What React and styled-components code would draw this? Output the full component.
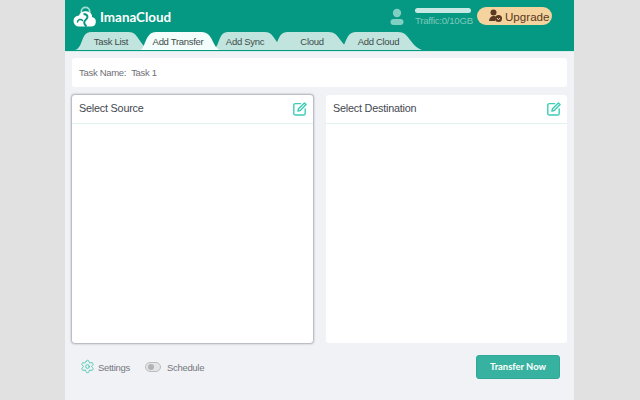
import React from "react";
import styled, { createGlobalStyle } from "styled-components";
import { Settings } from "lucide-react";

const Global = createGlobalStyle`
  html, body { margin: 0; padding: 0; background: #e1e1e1; }
  body { font-family: "Liberation Sans", Arial, sans-serif; }
  #root { width: 640px; height: 400px; overflow: hidden; }
`;
const Page = styled.div`
  width: 509px; height: 400px; margin-left: 65px; background: #f0f2f6;
  display: flex; flex-direction: column;
`;
const Header = styled.header`
  height: 52px; box-sizing: border-box; background: #059882; flex: none; padding: 0 0 0 8px;
  display: flex; flex-direction: column; border-bottom: 1px solid #d4efea;
`;
const TopBar = styled.div`
  height: 32px; display: flex; align-items: center; flex: none;
`;
const Logo = styled.div`
  display: flex; align-items: center; gap: 3px; margin-top: 1px;
  color: #fff; font-family: "Lato", sans-serif; font-size: 13.4px; font-weight: 700;
  svg { display: block; }
`;
const Account = styled.div`
  margin-left: auto; margin-right: 22px; display: flex; align-items: center;
`;
const UserIcon = styled.svg`
  width: 14px; height: 18px; margin-right: 11px; margin-top: 1px;
`;
const Usage = styled.div`
  width: 56px; margin-right: 6px; display: flex; flex-direction: column; gap: 2px; margin-top: 3px;
`;
const UsageBar = styled.div`
  height: 5px; border-radius: 3px; background: #c7e8e3;
`;
const UsageText = styled.div`
  font-size: 9.6px; letter-spacing: -.25px; line-height: 12px; color: #7fcabd; white-space: nowrap;
`;
const Upgrade = styled.div`
  width: 75px; height: 18px; border-radius: 9px; background: #f5d39e;
  display: flex; align-items: center; color: #5a3a22; font-size: 11.6px; padding-left: 11px;
  box-sizing: border-box; gap: 2px;
`;
const Tabs = styled.nav`
  display: flex; height: 18px; margin-left: 2px;
`;
const TabItem = styled.div`
  position: relative; height: 18px; width: ${p => p.$w}px; margin-right: ${p => p.$mr || 0}px;
  z-index: ${p => (p.$active ? 2 : 1)};
  display: flex; align-items: center; justify-content: center;
  font-size: 9.5px; letter-spacing: -.3px; color: #404b49; padding-top: 1px; box-sizing: border-box;
  padding-right: ${p => p.$pr || 0}px;
  padding-left: ${p => p.$pl || 0}px;
  svg { position: absolute; inset: 0; width: 100%; height: 100%; }
  span { position: relative; }
`;
const Tab = ({ w, mr, pr, pl, active, children }) => (
  <TabItem $w={w} $mr={mr} $pr={pr} $pl={pl} $active={active}>
    <svg viewBox="0 0 70 18" preserveAspectRatio="none">
      <path
        d={active
          ? "M0 18C5 17 4 0 14 0L54 0C64 0 63 15 70 18Z"
          : "M0 18C8 16 5 0 15 0L50 0C60 0 59 13 70 18Z"}
        fill={active ? "#f3fdfb" : "#c2e4de"}
      />
    </svg>
    <span>{children}</span>
  </TabItem>
);
const Main = styled.main`
  flex: 1; padding: 6px 7px 0 7px; display: flex; flex-direction: column; gap: 8px; min-height: 0;
`;
const NameCard = styled.div`
  height: 29px; background: #fff; border-radius: 3px; display: flex; align-items: center;
  padding-left: 7px; font-size: 9.5px; letter-spacing: -.3px; color: #6f6f76; gap: 5px; flex: none;
`;
const Panels = styled.div`
  height: 248px; display: flex; gap: 13px; flex: none;
`;
const Panel = styled.section`
  flex: 1; background: #fff; border-radius: 3px; display: flex; flex-direction: column;
  box-sizing: border-box;
  box-shadow: ${p => (p.$sel ? "0 0 2px 1px rgba(110,115,125,.55)" : "none")};
`;
const PanelHead = styled.div`
  height: 29px; box-sizing: border-box; border-bottom: 1.5px solid #e1f2ee; display: flex; align-items: center;
  justify-content: space-between; padding: 0 6px 2px 7px;
  font-size: 10.8px; letter-spacing: -.2px; color: #44474f;
`;
const EditIcon = styled.svg`
  width: 14px; height: 14px; display: block; margin-top: 1px;
`;
const Footer = styled.footer`
  height: 24px; margin-top: 4px; display: flex; align-items: center; padding: 0 7px 0 8px;
`;
const SettingsLink = styled.div`
  display: flex; align-items: center; gap: 3px; font-size: 9.5px; letter-spacing: -.3px; color: #77787e; margin-right: 15px;
  svg { color: #3fc4ae; margin-top: -2px; }
`;
const ScheduleText = styled.span`
  font-size: 9.5px; letter-spacing: -.3px; color: #77787e; margin-left: 6px;
`;
const Toggle = styled.div`
  width: 12px; height: 8px; border: 1px solid #bdbdbd; border-radius: 6px; background: #e3e4e7;
  display: flex; align-items: center; padding-left: 2px;
  &::before { content: ""; width: 6px; height: 6px; border-radius: 50%; background: #b3b3b3; }
`;
const Transfer = styled.button`
  margin-left: auto; width: 84px; height: 24px; border: 1px solid #2fa896; border-radius: 3px;
  background: #38b2a0; color: #fff; font-family: "Lato", sans-serif; font-weight: 700; font-size: 9.4px;
  padding: 0 0 2px; box-sizing: border-box;
`;

const Edit = () => (
  <EditIcon viewBox="0 0 14 14" fill="none" stroke="#3ccdb6" strokeWidth="1.4" strokeLinecap="round" strokeLinejoin="round">
    <path d="M7.500 1.600H2.400a1.600 1.600 0 0 0-1.600 1.600v8.200a1.600 1.600 0 0 0 1.600 1.600h8.200a1.600 1.600 0 0 0 1.600-1.600V7" />
    <path d="M11.400.9l1.700 1.700-5.900 5.900-2.300.6.6-2.300z" />
  </EditIcon>
);

export default function App() {
  return (
    <>
      <Global />
      <Page>
        <Header>
          <TopBar>
            <Logo>
              <svg width="24" height="22" viewBox="0 0 24 22" fill="none">
                <circle cx="12.500" cy="5.500" r="4.200" stroke="#9fe0d2" strokeWidth="1.800" />
                <path d="M6 9.500a5.500 5.500 0 0 0 0 11h12a4.800 4.800 0 0 0 1-9.500 6.500 5 0 0 0-13-1.500z" fill="#fff" />
                <path d="M10.500 8c4.500.3 5 3.500 2.500 5.500s-2.500 4 .5 7" stroke="#059882" strokeWidth="2" fill="none" />
                <path d="M4.500 16a2.800 2.800 0 0 1 5-1.500" stroke="#059882" strokeWidth="1.500" fill="none" strokeLinecap="round" />
              </svg>
              <span>ImanaCloud</span>
            </Logo>
            <Account>
              <UserIcon viewBox="0 0 14 18">
                <circle cx="7" cy="5" r="4.200" fill="#7fcfc2" />
                <rect x="0.500" y="11" width="13" height="6" rx="3" fill="#7fcfc2" />
              </UserIcon>
              <Usage>
                <UsageBar />
                <UsageText>Traffic:0/10GB</UsageText>
              </Usage>
              <Upgrade>
                <svg width="15" height="14" viewBox="0 0 15 14">
                  <circle cx="5.500" cy="3.500" r="3" fill="#5a3a22" />
                  <path d="M1 12c0-3 2-5 4.500-5 1.200 0 2 .4 2.500 1l-1 4z" fill="#5a3a22" />
                  <circle cx="10.500" cy="9.500" r="3.500" fill="#5a3a22" />
                  <path d="M9 9l1.500 1.800L12 9" stroke="#f5d39e" strokeWidth="1" fill="none" />
                </svg>
                <span>Upgrade</span>
              </Upgrade>
            </Account>
          </TopBar>
          <Tabs>
            <Tab w={75} mr={-10} pr={3}>Task List</Tab>
            <Tab w={80} mr={-8} pr={4} active>Add Transfer</Tab>
            <Tab w={74} mr={-16} pr={8}>Add Sync</Tab>
            <Tab w={82} mr={-14} pl={2}>Cloud</Tab>
            <Tab w={84} pr={3}>Add Cloud</Tab>
          </Tabs>
        </Header>
        <Main>
          <NameCard><span>Task Name:</span><span>Task 1</span></NameCard>
          <Panels>
            <Panel $sel>
              <PanelHead>Select Source<Edit /></PanelHead>
            </Panel>
            <Panel>
              <PanelHead>Select Destination<Edit /></PanelHead>
            </Panel>
          </Panels>
          <Footer>
            <SettingsLink><Settings size={15} strokeWidth={1.4} /><span>Settings</span></SettingsLink>
            <Toggle />
            <ScheduleText>Schedule</ScheduleText>
            <Transfer>Transfer Now</Transfer>
          </Footer>
        </Main>
      </Page>
    </>
  );
}
